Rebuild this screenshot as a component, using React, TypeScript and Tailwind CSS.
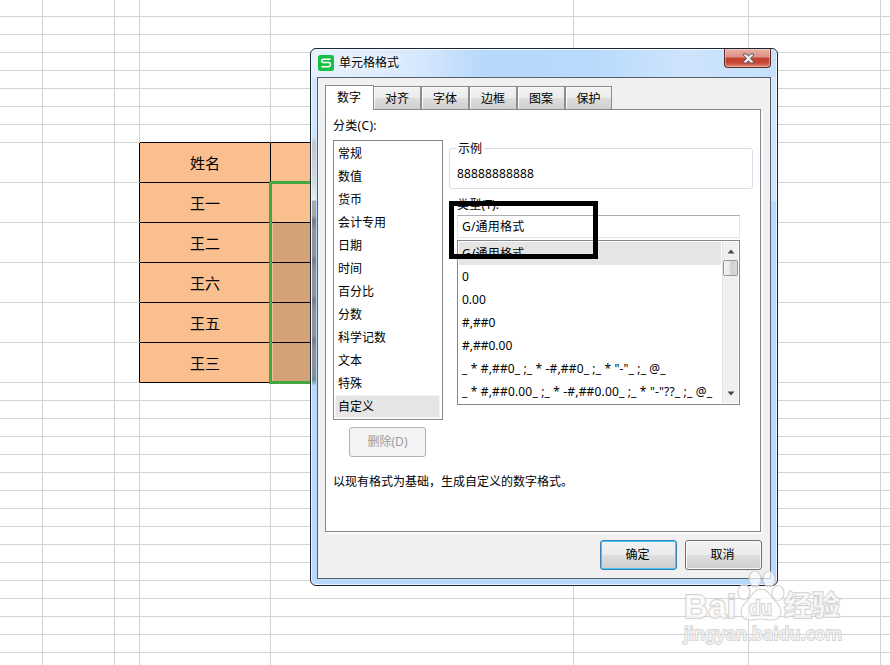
import clsx from "clsx";

const names = ["姓名", "王一", "王二", "王六", "王五", "王三"];

const categories = [
  "常规",
  "数值",
  "货币",
  "会计专用",
  "日期",
  "时间",
  "百分比",
  "分数",
  "科学记数",
  "文本",
  "特殊",
  "自定义",
];

const formats = [
  { text: "G/通用格式", spacing: "tracking-[0.2px]" },
  { text: "0", spacing: "" },
  { text: "0.00", spacing: "" },
  { text: "#,##0", spacing: "" },
  { text: "#,##0.00", spacing: "" },
  { text: '_ * #,##0_ ;_ * -#,##0_ ;_ * "-"_ ;_ @_', spacing: "tracking-[0.14px]" },
  { text: '_ * #,##0.00_ ;_ * -#,##0.00_ ;_ * "-"??_ ;_ @_', spacing: "tracking-[0.16px]" },
];

const tabs = ["对齐", "字体", "边框", "图案", "保护"];

const columns = ["w-[43px]", "w-[72px]", "w-[25px]", "w-[131px]", "w-[303px]", "w-[175px]", "w-[132px]", "w-[12px]"];

function BlankRow({ height, last }: { height: string; last?: boolean }) {
  return (
    <div className={clsx("flex shrink-0", height)}>
      {columns.map((w, i) => (
        <div
          key={i}
          className={clsx(
            "shrink-0 border-r border-b border-[#d3d3d3]",
            w,
            last && (i === 3 || i === 4) && "border-b-black",
          )}
        />
      ))}
    </div>
  );
}

function NameRow({ name, index }: { name: string; index: number }) {
  return (
    <div className="flex h-10 shrink-0">
      {columns.map((w, i) => (
        <div
          key={i}
          className={clsx(
            "flex shrink-0 items-center justify-center border-r border-b pt-0.5 text-[15px] leading-none",
            w,
            i === 3 || i === 4 ? "border-black" : "border-[#d3d3d3]",
            i === 2 && "border-r-black",
            (i === 3 || (i === 4 && index < 2)) && "bg-[#f9bf8f]",
            i === 4 && index > 1 && "bg-[#d4a279] shadow-[inset_2px_0_0_#f9bf8f]",
          )}
        >
          {i === 3 && name}
        </div>
      ))}
    </div>
  );
}

function Sheet() {
  return (
    <div className="flex h-full w-full flex-col overflow-hidden bg-white">
      <BlankRow height="h-[17px]" />
      {Array.from({ length: 7 }, (_, i) => (
        <BlankRow key={i} height="h-[18px]" last={i === 6} />
      ))}
      {names.map((n, i) => (
        <NameRow key={n} name={n} index={i} />
      ))}
      {Array.from({ length: 16 }, (_, i) => (
        <BlankRow key={i} height="h-[18px]" />
      ))}
    </div>
  );
}

function TitleBar() {
  return (
    <div className="flex h-[28px] shrink-0 items-start justify-between pl-[7px]">
      <div className="flex items-center pt-[6px]">
        <svg width="16" height="16" viewBox="0 0 16 16">
          <rect width="16" height="16" rx="2.5" fill="#13c044" />
          <path
            d="M12.6 4.2H5.3Q3.6 4.2 3.6 5.8T5.3 7.6H10.7Q12.4 7.6 12.4 9.6T10.7 11.7H3.4"
            fill="none"
            stroke="#fff"
            strokeWidth="1.5"
          />
        </svg>
        <span className="ml-[5px] text-[12px] leading-4 [text-shadow:0_0_6px_#fff,0_0_8px_#fff]">单元格格式</span>
      </div>
      <button
        type="button"
        aria-label="关闭"
        className="mr-[6px] flex h-[19px] w-[47px] items-center justify-center rounded-b-[4px] border border-t-0 border-[#5a2a2c] bg-[linear-gradient(#e9b0a6,#dc8f83_45%,#c0412f_50%,#c84533_75%,#df8a70)] shadow-[inset_0_0_0_1px_rgba(255,255,255,0.35)]"
      >
        <svg className="ml-px" width="13" height="11" viewBox="0 0 13 11">
          <path
            d="M1.5 1h3l2 2.3L8.500 1h3v1.200L8.400 5.500l3.100 3.300V10h-3l-2-2.300L4.500 10h-3V8.800l3.100-3.300L1.500 2.200z"
            fill="#f4f4f6"
            stroke="#535666"
            strokeWidth="1"
          />
        </svg>
      </button>
    </div>
  );
}

function TabStrip() {
  return (
    <div className="flex h-[25px] items-end">
      <div className="relative z-10 -mb-px flex h-[25px] w-[49px] items-center justify-center border border-b-0 border-[#898c95] bg-white pr-px pb-px">
        数字
      </div>
      {tabs.map((t, i) => (
        <div
          key={t}
          className={clsx(
            "flex h-[23px] items-center justify-center border border-b-0 border-[#898c95] bg-[linear-gradient(#f3f3f3,#ebebeb_48%,#dddddd_52%,#cfcfcf)] pt-0.5 shadow-[inset_1px_1px_0_#fafafa]",
            i === 0 && "w-[47px] border-l-0",
            i > 0 && i < 4 && "w-12",
            i === 4 && "w-[47px]",
          )}
        >
          {t}
        </div>
      ))}
    </div>
  );
}

function CategoryList() {
  return (
    <div className="h-[280px] w-[110px] border border-[#828790] bg-white p-px">
      {categories.map((c, i) => (
        <div
          key={c}
          className={clsx(
            "flex h-[23px] items-center pl-[3px]",
            i === categories.length - 1 &&
              "mr-px bg-[#e5e5e5] outline-1 -outline-offset-1 outline-dotted outline-white",
          )}
        >
          {c}
        </div>
      ))}
    </div>
  );
}

function ScrollBar() {
  return (
    <div className="flex w-4 flex-col items-center border-l border-[#e3e3e3] bg-[#f0f0f0]">
      <svg className="mt-[7px]" width="8" height="5" viewBox="0 0 8 5">
        <path d="M0.500 4.500 4 0.500 7.500 4.500z" fill="#45474b" />
      </svg>
      <div className="mt-[6px] h-4 w-[15px] rounded-[2px] border border-[#979797] bg-[linear-gradient(90deg,#f5f5f5,#e6e6e8_45%,#cfcfd3_55%,#dcdce0)]" />
      <svg className="mt-auto mb-[7px]" width="8" height="5" viewBox="0 0 8 5">
        <path d="M0.500 0.500 4 4.500 7.500 0.500z" fill="#45474b" />
      </svg>
    </div>
  );
}

function FormatList() {
  return (
    <div className="mt-[2px] flex h-[165px] w-[283px] overflow-hidden border border-[#828790] bg-white py-px pr-px">
      <div className="flex-1">
        {formats.map((f, i) => (
          <div
            key={f.text}
            className={clsx(
              "ml-px flex h-[23px] items-center pl-[3px] whitespace-pre",
              i === 0 && "mr-px bg-[#e5e5e5]",
              f.spacing,
            )}
          >
            {f.text}
          </div>
        ))}
      </div>
      <ScrollBar />
    </div>
  );
}

function TypePanel() {
  return (
    <div className="relative mt-[8px] ml-[6px] w-[304px]">
      <fieldset className="relative h-[41px] rounded-[3px] border border-[#d5dfe5] pt-[17px] pl-[7px]">
        <span className="absolute -top-[8px] left-[6px] bg-white px-[2px] leading-4">示例</span>
        <span className="block leading-4 tracking-[0.14px]">88888888888</span>
      </fieldset>
      <div className="pl-2">
        <div className="mt-[8px] h-[18px] leading-[15px] tracking-[0.2px]">类型(T):</div>
        <div className="flex h-[23px] w-[283px] items-center border border-[#e2e3ea] border-t-[#abadb3] pl-1 tracking-[0.2px]">
          G/通用格式
        </div>
        <FormatList />
      </div>
      <div className="absolute top-[53px] left-0 h-[58px] w-[149px] border-[5px] border-black" />
    </div>
  );
}

function Dialog() {
  return (
    <div className="absolute top-[48px] left-[310px] flex h-[538px] w-[468px] flex-col rounded-[6px] border border-[#1c2735] bg-[linear-gradient(#d3e7fc,#cfe5fc_152px,#b7d9fb_153px)] shadow-[inset_0_0_0_1px_rgba(255,255,255,0.7)]">
      <div className="absolute inset-x-px top-px h-[27px] rounded-t-[5px] bg-[linear-gradient(90deg,#e6f1fd,#d8e9fc_22%,#b5d8fb_38%,#b8dafc_60%,#cde4fc_80%,#c6e0fb)]" />
      {/* sheet colours showing through the glass edge */}
      <div className="absolute top-[88px] left-px h-[249px] w-[4px] bg-[linear-gradient(#d0e4f8,#c4c4c8_6px,#d2d2d5_35px,#d0dcd8_45px,#ebebeb_63px,#a9a9ad_64px,#a8a8ac_78px,#77777c_84px,#919197_92px,#929298_118px,#7b7b81_124px,#919197_132px,#929298_158px,#7b7b81_164px,#919197_172px,#929298_198px,#7b7b81_204px,#919197_212px,#8f9096_236px,#719089_243px,#b7d9fb)]" />
      <div className="relative flex flex-1 flex-col">
        <TitleBar />
        <div className="ml-[6px] h-[502px] w-[454px] border border-[#555f6e] bg-[#f0f0f0] pt-[6px] pl-[7px] text-[12px] leading-4">
          <TabStrip />
          <div className="h-[423px] w-[436px] border border-[#828790] bg-white pl-[7px] shadow-[2px_2px_0_#fafafa]">
            <div className="flex">
              <div>
                <div className="mt-[8px] mb-[6px] leading-4 tracking-[0.3px]">分类(C):</div>
                <CategoryList />
                <button
                  type="button"
                  className="mt-[7px] ml-4 block h-[30px] w-[77px] rounded-[3px] border border-[#adb2b5] bg-[#f4f4f4] text-[#9c9c9c]"
                >
                  删除(D)
                </button>
              </div>
              <div className="mt-[30px]">
                <TypePanel />
              </div>
            </div>
            <p className="mt-[17px] leading-4">以现有格式为基础，生成自定义的数字格式。</p>
          </div>
          <div className="mt-[8px] mr-[8px] flex justify-end gap-2">
            <button
              type="button"
              className="h-[30px] w-[77px] rounded-[3px] border border-[#3c7fb1] bg-[linear-gradient(#f2f2f2,#ebebeb_48%,#dddddd_52%,#cfcfcf)] pr-0.5 shadow-[inset_0_0_0_1px_#45c8f2]"
            >
              确定
            </button>
            <button
              type="button"
              className="h-[30px] w-[77px] rounded-[3px] border border-[#707070] bg-[linear-gradient(#f2f2f2,#ebebeb_48%,#dddddd_52%,#cfcfcf)] pr-0.5 shadow-[inset_0_0_0_1px_#f8f8f8]"
            >
              取消
            </button>
          </div>
        </div>
      </div>
    </div>
  );
}

function Watermark() {
  return (
    <svg
      className="absolute top-[565px] left-[678px]"
      width="172"
      height="85"
      viewBox="0 0 172 85"
      fill="#fff"
      fillOpacity="0.7"
      stroke="#c6c6c6"
      strokeOpacity="0.75"
      strokeWidth="1.2"
    >
      <ellipse cx="66" cy="27" rx="6" ry="7.500" />
      <ellipse cx="77" cy="14" rx="6" ry="8" />
      <ellipse cx="91" cy="14" rx="6" ry="8" />
      <ellipse cx="100" cy="28" rx="6" ry="7.500" />
      <path d="M83 24c5 0 8 4 10 7 3 5 10 9 10 15 0 6-3 9-9 9-4 0-7-1-11-1s-7 1-11 1c-6 0-9-3-9-9 0-6 7-10 10-15 2-3 5-7 10-7z" />
      <g fontFamily="Liberation Sans, sans-serif" fontWeight="700" paintOrder="stroke" strokeWidth="2">
        <text x="6" y="53" fontSize="34" textLength="52" lengthAdjust="spacingAndGlyphs">
          Bai
        </text>
        <text x="71" y="50" fontSize="21" textLength="23" lengthAdjust="spacingAndGlyphs">
          du
        </text>
      </g>
      <text
        x="106"
        y="51"
        fontSize="28"
        fontWeight="700"
        textLength="56"
        paintOrder="stroke"
        strokeWidth="2"
        fontFamily="Noto Sans CJK SC, sans-serif"
      >
        经验
      </text>
      <text
        x="6"
        y="75"
        fontSize="17.5"
        fontWeight="500"
        textLength="158"
        paintOrder="stroke"
        strokeWidth="1.8"
        fontFamily="Noto Sans, sans-serif"
      >
        jingyan.baidu.com
      </text>
    </svg>
  );
}

export default function App() {
  return (
    <div className="relative h-[665px] w-[890px] overflow-hidden bg-white font-['Noto_Sans','Noto_Sans_CJK_SC',sans-serif] text-black">
      <Sheet />
      <div className="absolute top-[181px] left-[269px] h-[203px] w-[305px] border-[3px] border-[#43a640]" />
      <Dialog />
      <Watermark />
    </div>
  );
}
